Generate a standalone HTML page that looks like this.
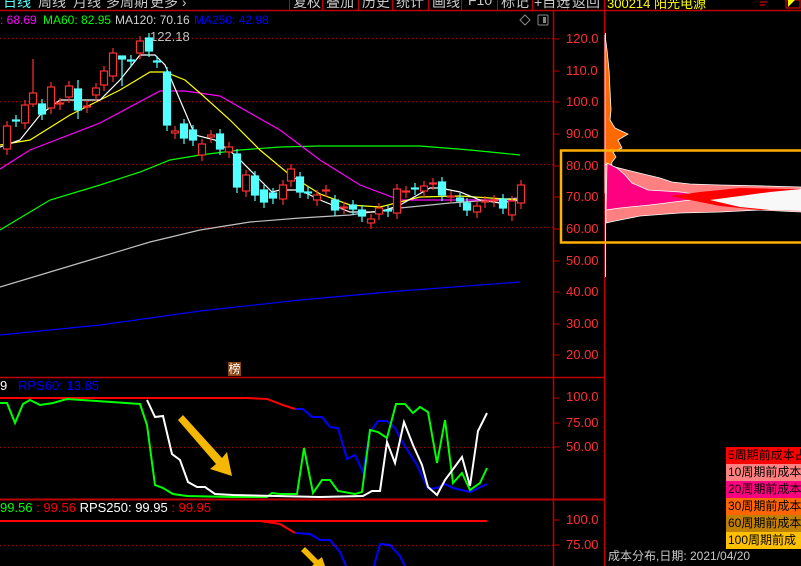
<!DOCTYPE html>
<html><head><meta charset="utf-8"><style>
body{margin:0;background:#000;width:801px;height:566px;overflow:hidden;position:relative;font-family:"Liberation Sans","Noto Sans CJK SC",sans-serif}
.t{position:absolute;white-space:nowrap;font-size:13px;line-height:14px}
.h{position:absolute;white-space:nowrap;font-size:12px;line-height:14px;top:13px}
.ax{position:absolute;left:566px;color:#ff3030;font-size:13px;line-height:14px}
.btn{position:absolute;top:-8px;color:#c8c8c8;font-size:14px}
.lg{position:absolute;left:726px;width:75px;height:17px;font-size:12px;line-height:17px;color:#000;overflow:hidden;white-space:nowrap;padding-left:2px;box-sizing:border-box}
</style></head><body>
<svg width="801" height="566" style="position:absolute;left:0;top:0">
<g stroke="#c00000" stroke-width="1.5" fill="none">
<line x1="0" y1="10.5" x2="801" y2="10.5"/>
<line x1="553.5" y1="10" x2="553.5" y2="566"/>
<line x1="604.5" y1="0" x2="604.5" y2="566"/>
<line x1="0" y1="377.5" x2="604" y2="377.5"/>
<line x1="0" y1="499.5" x2="604" y2="499.5" stroke-width="2"/>
<g stroke-width="1"><line x1="289.5" y1="0" x2="289.5" y2="10"/><line x1="322.5" y1="0" x2="322.5" y2="10"/><line x1="358.5" y1="0" x2="358.5" y2="10"/><line x1="392.5" y1="0" x2="392.5" y2="10"/><line x1="428.5" y1="0" x2="428.5" y2="10"/><line x1="461.5" y1="0" x2="461.5" y2="10"/><line x1="497.5" y1="0" x2="497.5" y2="10"/><line x1="532.5" y1="0" x2="532.5" y2="10"/><line x1="567.5" y1="0" x2="567.5" y2="10"/></g>
</g>
<g stroke="#c00000" stroke-width="1">
<line x1="553" y1="39" x2="559" y2="39"/><line x1="553" y1="71" x2="559" y2="71"/><line x1="553" y1="102" x2="559" y2="102"/><line x1="553" y1="134" x2="559" y2="134"/><line x1="553" y1="166" x2="559" y2="166"/><line x1="553" y1="197" x2="559" y2="197"/><line x1="553" y1="229" x2="559" y2="229"/><line x1="553" y1="261" x2="559" y2="261"/><line x1="553" y1="292" x2="559" y2="292"/><line x1="553" y1="324" x2="559" y2="324"/><line x1="553" y1="355" x2="559" y2="355"/>
<line x1="553" y1="398" x2="559" y2="398"/><line x1="553" y1="423" x2="559" y2="423"/><line x1="553" y1="447" x2="559" y2="447"/><line x1="553" y1="520" x2="559" y2="520"/><line x1="553" y1="545" x2="559" y2="545"/>
</g>
<g stroke="#b00000" stroke-width="1" stroke-dasharray="1,3">
<line x1="0" y1="38.5" x2="553" y2="38.5"/><line x1="0" y1="101.5" x2="553" y2="101.5"/><line x1="0" y1="164.5" x2="553" y2="164.5"/><line x1="0" y1="227.5" x2="553" y2="227.5"/>
<line x1="0" y1="447.5" x2="553" y2="447.5"/><line x1="0" y1="545.5" x2="553" y2="545.5"/>
</g>
<g fill="none" stroke-width="1.2">
<polyline stroke="#0000ff" points="0,335 100,325 200,311 300,300 400,291 520,282"/>
<polyline stroke="#c0c0c0" points="0,287 50,272 100,257 150,242 200,230 250,222 300,218 350,215 400,208 450,203 520,198"/>
<polyline stroke="#00ff00" points="0,230 50,200 100,185 140,172 170,160 200,155 240,150 280,147 320,146 420,146 470,150 520,155"/>
<polyline stroke="#ff00ff" points="0,169 30,150 100,123 160,91 185,91 220,96 280,130 320,160 360,185 400,200 450,200 520,200"/>
<polyline stroke="#ffff00" points="0,145 30,140 70,115 100,100 120,90 150,72 165,72 185,80 200,93 230,120 260,150 290,175 320,194 350,205 380,207 420,197 460,196 520,200"/>
<polyline stroke="#ffffff" points="0,147 20,140 40,115 60,100 80,100 100,100 120,80 140,55 155,55 165,65 180,100 195,135 215,140 235,155 260,180 272,192 280,190 300,190 320,200 350,212 380,212 400,205 430,188 440,188 460,192 480,200 500,203 520,200"/>
</g>
<g stroke-width="1.2" id="c"></g>
<text x="150" y="41" fill="#c0c0c0" font-size="13" font-family="Liberation Sans">122.18</text>
<g fill="none" stroke-width="2">
<polyline stroke="#ff0000" points="0,398 147,398 247,398 267,399 283,405 295,409"/>
<polyline stroke="#0000ff" points="295,409 303,409 312,417 322,417 330,427 338,428 347,459 355,455 363,472 370,432 378,421 387,421 395,428 403,443 417,465 428,489 437,488 445,484 453,488 470,492 487,484"/>
<polyline stroke="#00ff00" points="0,403 7,403 15,423 23,404 30,400 40,405 53,403 67,399 140,404 147,425 155,485 163,488 173,494 187,496 233,497 267,497 272,493 280,494 297,494 304,448 313,493 322,480 330,480 338,491 355,494 362,492 370,430 378,432 387,438 396,404 405,404 413,413 420,407 428,412 437,463 445,420 453,483 462,473 470,490 480,483 487,468"/>
<polyline stroke="#ffffff" points="147,400 155,417 163,416 172,454 180,460 188,482 197,487 205,487 215,494 233,495 320,497 363,496 372,491 380,491 387,442 395,463 404,422 413,445 422,465 428,487 437,495 445,480 462,457 470,486 478,431 487,413"/>
<polyline stroke="#ff0000" points="0,521 487,521"/>
<polyline stroke="#ff0000" points="260,521 280,524 295,533"/>
<polyline stroke="#0000ff" points="295,533 310,534 320,540 330,540 340,552 346,566"/>
<polyline stroke="#0000ff" points="374,566 380,544 390,545 400,556 405,566"/>
</g>
<polygon fill="#f5b800" points="183,415 222,458 227,452 232,476 210,469 216,464 178,420"/>
<polygon fill="#f5b800" points="305,547 318,560 322,557 325,566 312,566 314,564 301,551"/>
<line x1="605.5" y1="33" x2="605.5" y2="277" stroke="#fff" stroke-width="1"/>
<polygon fill="#ff6a00" stroke="#fff" stroke-width="0.8" points="605,35 607,50 609,70 610,90 611,110 610,120 615,128 628,134 618,140 622,148 613,152 616,157 612,162 611,172 612,183 610,193 605,193"/>
<polygon fill="#ff8080" stroke="#fff" stroke-width="0.8" points="605,164 615,167 635,172 660,178 672,182 690,184 720,185 765,186 801,187 801,212 760,210 720,212 680,213 640,216 615,221 606,223"/>
<polygon fill="#ff0080" stroke="#fff" stroke-width="0.8" points="607,163 617,168 625,175 632,183 648,190 680,192 700,195 690,200 650,205 620,208 606,210"/>
<polygon fill="#ff0000" points="670,196 700,192 740,188 790,189 801,189 801,211 760,210 720,206 700,202"/>
<polygon fill="#f8f8f8" points="710,200 740,196 770,192 801,189 801,211 770,210 740,207"/>
<rect x="561" y="150.5" width="242" height="92" fill="none" stroke="#ffb000" stroke-width="2.5"/>
<polygon points="525,15 530,20 525,25 520,20" fill="none" stroke="#888"/>
<rect x="538" y="15" width="10" height="10" fill="none" stroke="#888" rx="1"/><rect x="543" y="17" width="3" height="6" fill="#888"/>
<rect x="786" y="0" width="14" height="8" fill="none" stroke="#f00"/><polygon points="788,0 795,0 788,7" fill="#ff0"/>
<g stroke="#f00"><line x1="760" y1="2" x2="767" y2="2"/><line x1="760" y1="5" x2="765" y2="5"/></g>
</svg>
<script>
var C=[[7,126,149,1],[16,120,121,0],[25,105,123,1],[33,93,104,1,59,107],[42,104,114,0],[51,87,108,1],[60,103,104,1],[69,86,97,1],[78,89,110,0,80,119],[87,106,107,1],[96,88,95,1],[104,71,85,1],[113,53,76,1],[122,56,59,0,56,86],[131,60,61,0],[140,41,53,1],[149,38,51,0],[157,61,62,0],[167,72,125,0],[175,131,133,1],[184,124,138,0],[193,130,140,0],[202,144,155,1],[211,135,137,1],[220,134,149,0],[229,147,152,1],[237,154,187,0],[246,175,191,1],[255,176,195,0],[264,190,202,0],[273,193,198,0],[283,185,199,1],[291,169,181,1],[300,177,192,0],[308,192,193,0],[317,195,200,1],[326,190,191,1],[335,200,210,0],[344,207,208,1],[353,205,209,0],[362,210,216,0],[371,219,223,1],[379,208,214,1],[388,210,211,0],[397,189,213,1],[406,191,192,1],[415,188,189,0],[424,186,191,1],[433,183,184,1],[442,182,195,0],[451,196,197,1],[460,198,201,0],[467,203,210,0],[477,206,212,1],[485,201,202,1],[494,200,201,1],[503,199,208,0],[512,201,215,1],[521,185,203,1]];
var s='';C.forEach(function(c){var col=c[3]?'#ff3030':'#54ffff';var t=c[4]||c[1]-5,b=c[5]||c[2]+6;
s+='<line x1="'+c[0]+'" y1="'+t+'" x2="'+c[0]+'" y2="'+b+'" stroke="'+col+'"/>';
var h=Math.max(c[2]-c[1],1);
s+='<rect x="'+(c[0]-3.5)+'" y="'+c[1]+'" width="7" height="'+h+'" fill="'+(c[3]?'#000':col)+'" stroke="'+col+'"/>';});
document.getElementById('c').innerHTML=s;
</script>
<div class="btn" style="left:3px;color:#5ff">日线</div>
<div class="btn" style="left:38px">周线</div>
<div class="btn" style="left:73px">月线</div>
<div class="btn" style="left:106px">多周期</div>
<div class="btn" style="left:150px">更多 ›</div>
<div class="btn" style="left:293px">复权</div>
<div class="btn" style="left:326px">叠加</div>
<div class="btn" style="left:362px">历史</div>
<div class="btn" style="left:396px">统计</div>
<div class="btn" style="left:432px">画线</div>
<div class="btn" style="left:468px">F10</div>
<div class="btn" style="left:501px">标记</div>
<div class="btn" style="left:534px">+自选</div>
<div class="btn" style="left:572px">返回</div>
<div class="btn" style="left:607px;color:#ff0;font-size:13px;top:-7px">300214 阳光电源</div>
<div class="h" style="left:0;color:#ff00ff">: 68.69</div>
<div class="h" style="left:43px;color:#00ff00">MA60: 82.95</div>
<div class="h" style="left:115px;color:#d0d0d0">MA120: 70.16</div>
<div class="h" style="left:194px;color:#0000ff">MA250: 42.98</div>
<div class="ax" style="top:32px">120.0</div><div class="ax" style="top:64px">110.0</div><div class="ax" style="top:95px">100.0</div><div class="ax" style="top:127px">90.00</div><div class="ax" style="top:159px">80.00</div><div class="ax" style="top:190px">70.00</div><div class="ax" style="top:222px">60.00</div><div class="ax" style="top:254px">50.00</div><div class="ax" style="top:285px">40.00</div><div class="ax" style="top:317px">30.00</div><div class="ax" style="top:348px">20.00</div>
<div class="ax" style="top:390px">100.0</div><div class="ax" style="top:416px">75.00</div><div class="ax" style="top:440px">50.00</div><div class="ax" style="top:513px">100.0</div><div class="ax" style="top:538px">75.00</div>
<div class="t" style="left:228px;top:362px;width:13px;height:14px;background:#8b4513;color:#fff;font-size:12px;text-align:center">榜</div>
<div class="t" style="left:0;top:379px"><span style="color:#fff">9</span>&nbsp;&nbsp; <span style="color:#0000ff">RPS60: 13.85</span></div>
<div class="t" style="left:0;top:501px"><span style="color:#00ff00">99.56</span> <span style="color:#f00">: 99.56</span> <span style="color:#fff">RPS250: 99.95</span> <span style="color:#f00">: 99.95</span></div>
<div class="lg" style="top:447px;background:#ff0000">5周期前成本占</div>
<div class="lg" style="top:464px;background:#ff8080">10周期前成本</div>
<div class="lg" style="top:481px;background:#ff0080">20周期前成本</div>
<div class="lg" style="top:498px;background:#ff6600">30周期前成本</div>
<div class="lg" style="top:515px;background:#c08000">60周期前成本</div>
<div class="lg" style="top:532px;background:#ffc000">100周期前成</div>
<div class="t" style="left:608px;top:549px;color:#c8c8c8;font-size:12px">成本分布,日期: 2021/04/20</div>
</body></html>
